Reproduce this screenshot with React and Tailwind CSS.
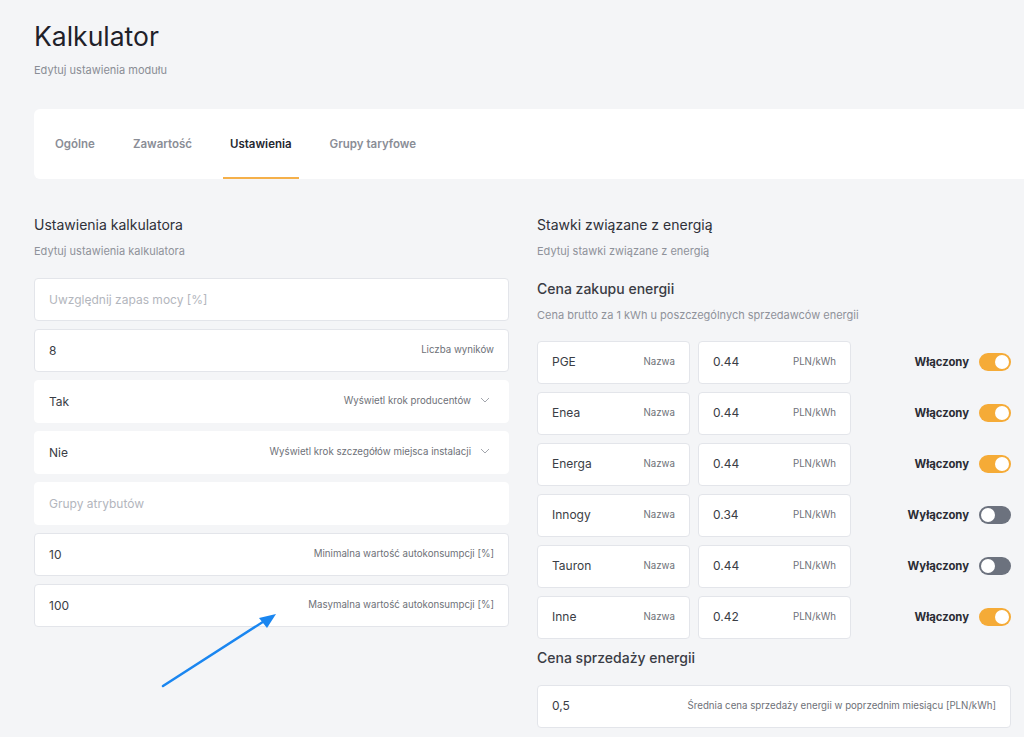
import React from 'react'

const font = { fontFamily: 'Inter, "Noto Sans", sans-serif' }

const Field = ({ value, placeholder, label, chevron, border = true }) => (
  <div
    className={`h-[43px] flex items-center justify-between px-[14px] bg-white rounded-[4px] border ${
      border ? 'border-[#e3e5ea]' : 'border-white'
    }`}
  >
    {value ? (
      <span className="text-[12px] text-[#3a3d45]">{value}</span>
    ) : (
      <span className="text-[12px] text-[#b3b6bd]">{placeholder}</span>
    )}
    {label && (
      <span className="flex items-center gap-[9px] text-[9.7px] text-[#6e7178]">
        {label}
        {chevron && (
          <svg width="10" height="6" viewBox="0 0 10 6" fill="none" className="mr-[4px] mb-[2px]">
            <path d="M1 1l4 4 4-4" stroke="#a3a6ad" strokeWidth="1" />
          </svg>
        )}
      </span>
    )}
  </div>
)

const Toggle = ({ on }) => (
  <div
    className={`w-[32px] h-[18px] rounded-full flex items-center px-[2px] ${
      on ? 'bg-[#f5ab37] justify-end' : 'bg-[#6c727e] justify-start'
    }`}
  >
    <div className="w-[14px] h-[14px] rounded-full bg-white" />
  </div>
)

const sellers = [
  { name: 'PGE', price: '0.44', on: true },
  { name: 'Enea', price: '0.44', on: true },
  { name: 'Energa', price: '0.44', on: true },
  { name: 'Innogy', price: '0.34', on: false },
  { name: 'Tauron', price: '0.44', on: false },
  { name: 'Inne', price: '0.42', on: true },
]

export default function App() {
  return (
    <div className="relative min-h-[737px] bg-[#f4f5f7] overflow-hidden pl-[34px] pr-[13px] pt-[20px]" style={font}>
      <h1 className="text-[26.5px] leading-[32px] text-[#1f2129]">Kalkulator</h1>
      <p className="mt-[10px] text-[11px] text-[#8a8d95]">Edytuj ustawienia modułu</p>

      <div className="mt-[30px] -mr-[40px] h-[70px] bg-white rounded-[6px] flex items-stretch pl-[21px]">
        {['Ogólne', 'Zawartość', 'Ustawienia', 'Grupy taryfowe'].map((t, i) => (
          <div
            key={t}
            className={`flex items-center pt-[4px] text-[11.5px] font-semibold border-b-2 ${
              i === 2
                ? 'text-[#252730] border-[#f5b04a] px-[7px] mr-[24px]'
                : 'text-[#8a8d96] border-transparent'
            } ${i === 0 ? 'mr-[38px]' : ''} ${i === 1 ? 'mr-[31px]' : ''} ${i === 3 ? 'ml-[7px]' : ''}`}
          >
            {t}
          </div>
        ))}
      </div>

      <div className="mt-[37px] grid grid-cols-2 gap-[27px]">
        <div>
          <h2 className="text-[14px] leading-[18px] text-[#2f3139]">Ustawienia kalkulatora</h2>
          <p className="mt-[9px] text-[11px] text-[#8f929a]">Edytuj ustawienia kalkulatora</p>
          <div className="mt-[19px] flex flex-col gap-[8px]">
            <Field placeholder="Uwzględnij zapas mocy [%]" />
            <Field value="8" label="Liczba wyników" />
            <Field value="Tak" label="Wyświetl krok producentów" chevron border={false} />
            <Field value="Nie" label="Wyświetl krok szczegółów miejsca instalacji" chevron border={false} />
            <Field placeholder="Grupy atrybutów" border={false} />
            <Field value="10" label="Minimalna wartość autokonsumpcji [%]" />
            <Field value="100" label="Masymalna wartość autokonsumpcji [%]" />
          </div>
        </div>

        <div className="pl-[1px]">
          <h2 className="text-[14px] leading-[18px] text-[#2f3139]">Stawki związane z energią</h2>
          <p className="mt-[9px] text-[11px] text-[#8f929a]">Edytuj stawki związane z energią</p>
          <h3 className="mt-[21px] text-[14px] leading-[18px] font-medium text-[#3a3c44]">Cena zakupu energii</h3>
          <p className="mt-[9px] text-[11px] text-[#8f929a]">Cena brutto za 1 kWh u poszczególnych sprzedawców energii</p>
          <div className="mt-[17px] flex flex-col gap-[8px]">
            {sellers.map((s) => (
              <div key={s.name} className="flex items-center gap-[8px]">
                <div className="w-[153px] h-[43px] flex items-center justify-between px-[14px] bg-white rounded-[4px] border border-[#e3e5ea]">
                  <span className="text-[12px] text-[#3a3d45]">{s.name}</span>
                  <span className="text-[9.7px] text-[#6e7178]">Nazwa</span>
                </div>
                <div className="w-[153px] h-[43px] flex items-center justify-between px-[14px] bg-white rounded-[4px] border border-[#e3e5ea]">
                  <span className="text-[12px] text-[#3a3d45]">{s.price}</span>
                  <span className="text-[9.7px] text-[#6e7178]">PLN/kWh</span>
                </div>
                <div className="flex-1 flex items-center justify-end gap-[10px]">
                  <span className="text-[11.3px] font-bold text-[#2a2c34]">{s.on ? 'Włączony' : 'Wyłączony'}</span>
                  <Toggle on={s.on} />
                </div>
              </div>
            ))}
          </div>
          <h3 className="mt-[10px] text-[14px] leading-[18px] font-medium text-[#3a3c44]">Cena sprzedaży energii</h3>
          <div className="mt-[18px]">
            <Field value="0,5" label="Średnia cena sprzedaży energii w poprzednim miesiącu [PLN/kWh]" />
          </div>
        </div>
      </div>

      <svg className="absolute left-[155px] top-[605px]" width="130" height="90" viewBox="0 0 130 90">
        <line x1="8" y1="81" x2="114" y2="13" stroke="#1a86f0" strokeWidth="2.5" strokeLinecap="round" />
        <polygon points="121,9 104,13 112,23" fill="#1a86f0" />
      </svg>
    </div>
  )
}
